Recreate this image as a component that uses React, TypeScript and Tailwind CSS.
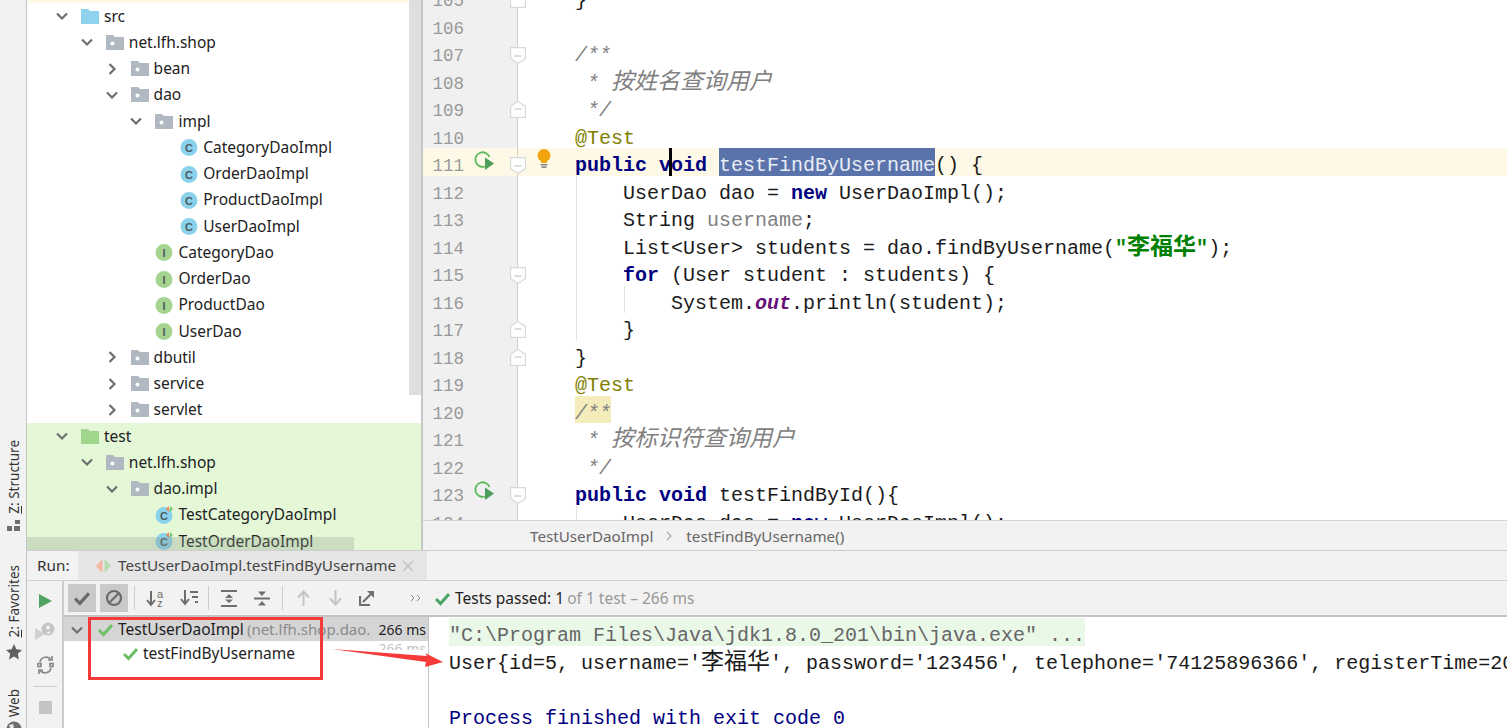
import React from 'react';

const MONO = 'font-["Liberation_Mono","Noto_Sans_CJK_SC",monospace]';

type Kind = 'src' | 'test' | 'pkg' | 'class' | 'iface' | 'testclass';

interface TreeRow {
  depth: number;
  label: string;
  kind: Kind;
  open?: boolean;
  green?: boolean;
}

const tree: TreeRow[] = [
  { depth: 0, label: 'src', kind: 'src', open: true },
  { depth: 1, label: 'net.lfh.shop', kind: 'pkg', open: true },
  { depth: 2, label: 'bean', kind: 'pkg', open: false },
  { depth: 2, label: 'dao', kind: 'pkg', open: true },
  { depth: 3, label: 'impl', kind: 'pkg', open: true },
  { depth: 4, label: 'CategoryDaoImpl', kind: 'class' },
  { depth: 4, label: 'OrderDaoImpl', kind: 'class' },
  { depth: 4, label: 'ProductDaoImpl', kind: 'class' },
  { depth: 4, label: 'UserDaoImpl', kind: 'class' },
  { depth: 3, label: 'CategoryDao', kind: 'iface' },
  { depth: 3, label: 'OrderDao', kind: 'iface' },
  { depth: 3, label: 'ProductDao', kind: 'iface' },
  { depth: 3, label: 'UserDao', kind: 'iface' },
  { depth: 2, label: 'dbutil', kind: 'pkg', open: false },
  { depth: 2, label: 'service', kind: 'pkg', open: false },
  { depth: 2, label: 'servlet', kind: 'pkg', open: false },
  { depth: 0, label: 'test', kind: 'test', open: true, green: true },
  { depth: 1, label: 'net.lfh.shop', kind: 'pkg', open: true, green: true },
  { depth: 2, label: 'dao.impl', kind: 'pkg', open: true, green: true },
  { depth: 3, label: 'TestCategoryDaoImpl', kind: 'testclass', green: true },
  { depth: 3, label: 'TestOrderDaoImpl', kind: 'testclass', green: true },
];

const NodeIcon = ({ kind }: { kind: Kind }) => {
  if (kind === 'src' || kind === 'test') {
    return (
      <svg width="18" height="15" viewBox="0 0 18 15">
        <path d="M0 0h7l2 2h9v13H0z" fill={kind === 'src' ? '#8dd3ee' : '#9fd68c'} />
      </svg>
    );
  }
  if (kind === 'pkg') {
    return (
      <svg width="18" height="15" viewBox="0 0 18 15">
        <path d="M0 0h7l2 2h9v13H0z" fill="#b0b9c1" />
        <circle cx="6.5" cy="8.5" r="2" fill="#fff" />
      </svg>
    );
  }
  const letter = kind === 'iface' ? 'I' : 'C';
  const fill = kind === 'iface' ? '#a5d491' : '#8ad2ec';
  return (
    <svg width="20" height="20" viewBox="0 0 20 20">
      <circle cx="9" cy="10.5" r="8.5" fill={fill} />
      <text
        x="9"
        y="14.5"
        textAnchor="middle"
        fontSize="11"
        fontWeight="700"
        fontFamily="Liberation Sans"
        fill="#4e5a60"
      >
        {letter}
      </text>
      {kind === 'testclass' && (
        <g>
          <path d="M14 1v6l-3-3z" fill="#ee8650" />
          <path d="M15 1v6l3-3z" fill="#7ec36c" />
        </g>
      )}
    </svg>
  );
};

const Chevron = ({ open }: { open: boolean }) => (
  <svg width="14" height="14" viewBox="0 0 14 14" fill="none" stroke="#6e6e6e" strokeWidth="2.2">
    {open ? <path d="M2 4.5l5 5 5-5" /> : <path d="M4.5 2l5 5-5 5" />}
  </svg>
);

const Check = ({ size = 15, color = '#6cc06a' }: { size?: number; color?: string }) => (
  <svg width={size} height={size} viewBox="0 0 15 15" fill="none" stroke={color} strokeWidth="3">
    <path d="M1 8l4.5 4.5L14 3" />
  </svg>
);

const Fold = ({ dir }: { dir: 'down' | 'up' }) => (
  <svg width="16" height="18" viewBox="0 0 16 18" fill="#fff" stroke="#d9d9d9" strokeWidth="1.2">
    {dir === 'down' ? <path d="M.6.6h14.8v11L8 16.6.6 11.6z" /> : <path d="M.6 17.4h14.8v-11L8 1.4.6 6.4z" />}
    <path d="M4.5 9h7" stroke="#c6c6c6" />
  </svg>
);

const RunGutter = () => (
  <svg width="22" height="22" viewBox="0 0 22 22" fill="none">
    <path d="M12 16.5A7.3 7.3 0 1 1 16.5 7" stroke="#5cb85c" strokeWidth="1.8" />
    <path d="M12 7.5l9 6-9 6.5z" fill="#4f9d5b" />
  </svg>
);

const Bulb = () => (
  <svg width="14" height="20" viewBox="0 0 14 20">
    <circle cx="7" cy="6.5" r="6.5" fill="#f0a30a" />
    <rect x="4" y="11" width="6" height="3" fill="#f0a30a" />
    <rect x="3.5" y="15" width="7" height="1.6" fill="#8c8c8c" />
    <rect x="4.5" y="17.4" width="5" height="1.6" fill="#8c8c8c" />
  </svg>
);

const K = ({ children }: { children: React.ReactNode }) => <span className="font-bold text-[#000080]">{children}</span>;
const Doc = ({ children }: { children: React.ReactNode }) => <span className="italic text-[#808080]">{children}</span>;
const Zh = ({ children }: { children: React.ReactNode }) => <span className="text-[23px]">{children}</span>;

interface CodeLine {
  n: number;
  fold?: 'down' | 'up';
  code?: React.ReactNode;
  guide?: boolean;
  guide2?: boolean;
}

const lines: CodeLine[] = [
  { n: 105, fold: 'up', code: '}' },
  { n: 106 },
  { n: 107, fold: 'down', code: <Doc>/**</Doc> },
  { n: 108, code: <Doc> * <Zh>按姓名查询用户</Zh></Doc> },
  { n: 109, fold: 'up', code: <Doc> */</Doc> },
  { n: 110, code: <span className="text-[#808000]">@Test</span> },
  {
    n: 111,
    fold: 'down',
    code: (
      <>
        <K>public void</K> <span className="text-[#e8ecf5]">testFindByUsername</span>() {'{'}
      </>
    ),
  },
  { n: 112, guide: true, code: <>    UserDao dao = <K>new</K> UserDaoImpl();</> },
  { n: 113, guide: true, code: <>    String <span className="text-[#808080]">username</span>;</> },
  {
    n: 114,
    guide: true,
    code: (
      <>
        {'    List<User> students = dao.findByUsername('}
        <span className="font-bold text-[#008000]">
          "<Zh>李福华</Zh>"
        </span>
        );
      </>
    ),
  },
  { n: 115, fold: 'down', guide: true, code: <>    <K>for</K> (User student : students) {'{'}</> },
  {
    n: 116,
    guide: true,
    guide2: true,
    code: (
      <>
        {'        System.'}
        <span className="font-bold italic text-[#660e7a]">out</span>.println(student);
      </>
    ),
  },
  { n: 117, fold: 'up', guide: true, code: '    }' },
  { n: 118, fold: 'up', code: '}' },
  { n: 119, code: <span className="text-[#808000]">@Test</span> },
  { n: 120, code: <Doc>/**</Doc> },
  { n: 121, code: <Doc> * <Zh>按标识符查询用户</Zh></Doc> },
  { n: 122, code: <Doc> */</Doc> },
  { n: 123, fold: 'down', code: <><K>public void</K> testFindById(){'{'}</> },
  { n: 124, guide: true, code: <>    UserDao dao = <K>new</K> UserDaoImpl();</> },
];

const Side = ({ children, className }: { children: React.ReactNode; className: string }) => (
  <div
    className={`shrink-0 whitespace-nowrap [writing-mode:vertical-rl] rotate-180 font-["Noto_Sans",sans-serif] text-[13.5px] leading-[18px] text-[#333] ${className}`}
  >
    {children}
  </div>
);

const LeftStrip = () => (
  <div className="flex w-[27px] shrink-0 flex-col items-center overflow-hidden border-r border-[#c4c4c4] bg-[#f2f2f2] pl-[2px]">
    <Side className="mt-[440px]">
      <span className="underline">Z</span>: Structure
    </Side>
    <svg className="mt-[6px] shrink-0" width="14" height="11" viewBox="0 0 14 11" fill="#6e6e6e">
      <rect x="8" y="0" width="5" height="4" />
      <rect x="0" y="6" width="5" height="5" />
      <rect x="7" y="6" width="6" height="5" />
    </svg>
    <Side className="mt-[34px]">
      <span className="underline">2</span>: Favorites
    </Side>
    <svg className="mt-[7px] shrink-0" width="16" height="16" viewBox="0 0 16 16" fill="#5f5f5f">
      <path d="M8 0l2.4 5.3 5.6.6-4.2 3.8 1.2 5.7L8 12.5l-5 2.9 1.2-5.7L0 5.9l5.6-.6z" />
    </svg>
    <Side className="mt-[29px]">Web</Side>
    <svg className="mt-[4px] shrink-0" width="16" height="16" viewBox="0 0 16 16">
      <circle cx="8" cy="8" r="7.5" fill="#6e6e6e" />
      <path d="M3 4l4-1 1 3-3 3zM10 9l4-1-1 5-3 1z" fill="#e8e8e8" />
    </svg>
  </div>
);

const ProjectTree = () => (
  <div className="relative w-[395px] shrink-0 overflow-hidden border-r border-[#c8c8c8] bg-white">
    <div className="h-[3px] bg-[#fdfbe6]" />
    {tree.map((r, i) => (
      <div
        key={i}
        className={`flex h-[26.25px] items-center font-["Noto_Sans",sans-serif] text-[15.5px] text-[#222] ${r.green ? 'bg-[#e4f8d8]' : ''}`}
        style={{ paddingLeft: 28 + r.depth * 24.8 }}
      >
        <span className="flex w-[14px] justify-center">{r.open !== undefined && <Chevron open={r.open} />}</span>
        <span className="ml-[12px] flex w-[23px] shrink-0 items-center">
          <NodeIcon kind={r.kind} />
        </span>
        <span>{r.label}</span>
      </div>
    ))}
    <div className="absolute right-0 top-0 h-[395px] w-[12px] bg-[#dfdfdf]" />
    <div className="absolute bottom-0 left-0 h-[13px] w-[327px] bg-[#8f9f88]/30" />
  </div>
);

const Editor = () => (
  <div className="flex min-w-0 flex-1 flex-col border-l border-[#c4c4c4] bg-white">
    <div className={`h-[520px] overflow-hidden ${MONO}`}>
      <div className="-mt-[17px]">
        {lines.map((l) => {
          const active = l.n === 111;
          return (
            <div key={l.n} className={`flex h-[27.5px] ${active ? 'bg-[#fdf9e6]' : ''}`}>
              <div
                className={`relative w-[95px] shrink-0 border-r border-[#cfcfcf] ${active ? '' : 'bg-[#f0f0f0]'}`}
              >
                <div className="w-[41px] pt-[6px] text-right text-[17.5px] leading-[24px] text-[#999]">{l.n}</div>
                {(l.n === 111 || l.n === 123) && (
                  <div className="absolute left-[50px] top-[2px]">
                    <RunGutter />
                  </div>
                )}
                {l.fold && (
                  <div className={`absolute left-[87px] z-10 ${l.fold === 'down' ? 'top-[9px]' : 'top-[7px]'}`}>
                    <Fold dir={l.fold} />
                  </div>
                )}
              </div>
              <div className="relative h-[27.5px] min-w-0 flex-1 whitespace-pre pl-[57px] text-[20px] leading-[35.5px] text-[#1b1b1b]">
                {l.guide && <div className="absolute bottom-0 left-[58px] top-0 w-px bg-[#e3e3e3]" />}
                {l.guide2 && <div className="absolute bottom-0 left-[106px] top-0 w-px bg-[#e3e3e3]" />}
                {active && (
                  <>
                    <div className="absolute left-[19px] top-[1px]">
                      <Bulb />
                    </div>
                    <div className="absolute bottom-0 left-[201px] top-0 w-[216px] bg-[#5a73aa]" />
                    <div className="absolute bottom-0 left-[151px] top-0 z-10 w-[3px] bg-black" />
                  </>
                )}
                {l.n === 120 && <div className="absolute bottom-0 left-[57px] top-0 w-[36px] bg-[#f5ecbc]" />}
                <span className="relative">{l.code}</span>
              </div>
            </div>
          );
        })}
      </div>
    </div>
    <div className='flex h-[30px] items-center border-t border-[#d4d4d4] bg-[#f2f2f2] pl-[107px] pt-[1px] font-["Noto_Sans",sans-serif] text-[15.2px] text-[#666]'>
      <span>TestUserDaoImpl</span>
      <svg className="ml-[13px] mr-[14px]" width="6" height="10" viewBox="0 0 6 10" fill="none" stroke="#aaa" strokeWidth="1.2">
        <path d="M1 1l4 4-4 4" />
      </svg>
      <span>testFindByUsername()</span>
    </div>
  </div>
);

const Sep = ({ className }: { className: string }) => <div className={`h-[24px] w-px bg-[#cdcdcd] ${className}`} />;

const Slot = ({ w, children }: { w: string; children: React.ReactNode }) => (
  <div className={`flex shrink-0 justify-center ${w}`}>{children}</div>
);

const Toolbar = () => (
  <div className='flex h-[34px] items-center bg-[#f2f2f2] pl-[4px] font-["Noto_Sans",sans-serif] text-[15.5px]'>
    <div className="flex h-[28px] w-[28px] items-center justify-center bg-[#c9c9c9]">
      <Check size={16} color="#6a6a6a" />
    </div>
    <div className="ml-[4px] flex h-[28px] w-[28px] items-center justify-center bg-[#c9c9c9]">
      <svg width="18" height="18" viewBox="0 0 18 18" fill="none" stroke="#6a6a6a" strokeWidth="2.2">
        <circle cx="9" cy="9" r="7" />
        <path d="M4.5 13.5l9-9" />
      </svg>
    </div>
    <Sep className="ml-[6px]" />
    <Slot w="ml-[3px] w-[34px]">
      <svg width="18" height="17" viewBox="0 0 18 17" fill="none" stroke="#6e6e6e" strokeWidth="2">
        <path d="M5 1v13M1 10l4 5 4-5" />
        <text x="11" y="7.500" fontSize="11" fontFamily="Liberation Sans" fill="#6e6e6e" stroke="none">a</text>
        <text x="11" y="16.500" fontSize="11" fontFamily="Liberation Sans" fill="#6e6e6e" stroke="none">z</text>
      </svg>
    </Slot>
    <Slot w="w-[34px]">
      <svg width="18" height="16" viewBox="0 0 18 16" fill="none" stroke="#6e6e6e" strokeWidth="2">
        <path d="M5 0v13M1 9l4 5 4-5" />
        <path d="M10 2h8M12 7h6M15 12h3" />
      </svg>
    </Slot>
    <Sep className="ml-[2px]" />
    <Slot w="ml-[3px] w-[33px]">
      <svg width="16" height="17" viewBox="0 0 16 17" fill="#6e6e6e">
        <rect x="0" y="0" width="16" height="2" />
        <rect x="0" y="15" width="16" height="2" />
        <path d="M8 4l4 4H4zM8 13L4 9.500h8z" />
      </svg>
    </Slot>
    <Slot w="w-[33px]">
      <svg width="16" height="17" viewBox="0 0 16 17" fill="#6e6e6e">
        <rect x="0" y="7.500" width="16" height="2" />
        <path d="M8 6L4 1.500h8zM8 11l4 4.500H4z" />
      </svg>
    </Slot>
    <Sep className="ml-[4px]" />
    <Slot w="ml-[4px] w-[32px]">
      <svg width="13" height="16" viewBox="0 0 13 16" fill="none" stroke="#c4c4c4" strokeWidth="2">
        <path d="M6.500 16V2M1 7.500l5.500-6 5.500 6" />
      </svg>
    </Slot>
    <Slot w="w-[32px]">
      <svg width="13" height="16" viewBox="0 0 13 16" fill="none" stroke="#c4c4c4" strokeWidth="2">
        <path d="M6.500 0v14M1 8.500l5.500 6 5.500-6" />
      </svg>
    </Slot>
    <Slot w="w-[32px]">
      <svg width="16" height="16" viewBox="0 0 16 16" fill="none" stroke="#6e6e6e" strokeWidth="2.2">
        <path d="M1 6v9h10" />
        <path d="M4 12L14 2" />
        <path d="M8 1h7v7" fill="#6e6e6e" stroke="none" />
      </svg>
    </Slot>
    <div className="ml-[27px] w-[14px] text-center leading-none">
      <svg width="11" height="8" viewBox="0 0 11 8" fill="none" stroke="#888" strokeWidth="1">
        <path d="M1 1l3 3-3 3M7 1l3 3-3 3" />
      </svg>
    </div>
    <div className="ml-[11px] flex items-center pt-[1px]">
      <Check size={15} color="#4aa565" />
      <span className="ml-[5px] text-[#222]">Tests passed: 1</span>
      <span className="ml-[3px] text-[#999]">of 1 test – 266 ms</span>
    </div>
  </div>
);

const RunPanel = () => (
  <div className="flex h-[178px] flex-col border-t border-[#cdcdcd] bg-[#f2f2f2]">
    <div className='flex h-[30px] shrink-0 items-stretch border-b border-[#cfcfcf] font-["Noto_Sans",sans-serif] text-[15.3px]'>
      <div className="flex w-[51px] items-center pl-[10px] text-[#333]">Run:</div>
      <div className="flex w-[349px] items-center bg-[#e6e6e6] pl-[18px] text-[#444]">
        <svg width="15" height="14" viewBox="0 0 15 14">
          <path d="M6.500 0v14L0 7z" fill="#f2b8a0" />
          <path d="M8.500 0v14L15 7z" fill="#b6dcae" />
        </svg>
        <span className="ml-[7px]">TestUserDaoImpl.testFindByUsername</span>
        <svg className="ml-[6px]" width="12" height="12" viewBox="0 0 12 12" stroke="#c4c4c4" strokeWidth="1.500">
          <path d="M1 1l10 10M11 1L1 11" />
        </svg>
      </div>
    </div>
    <div className="flex min-h-0 flex-1">
      <div className="flex w-[37px] shrink-0 flex-col items-center border-r-2 border-[#cdcdcd] pl-[1px]">
        <svg className="mt-[13px]" width="13" height="14" viewBox="0 0 13 14">
          <path d="M0 0l13 7-13 7z" fill="#4fa35e" />
        </svg>
        <svg className="mt-[14px]" width="20" height="20" viewBox="0 0 20 20">
          <path d="M0 6l10 6-10 6z" fill="#d0d0d0" />
          <circle cx="13" cy="7" r="6.500" fill="#c4c4c4" />
          <circle cx="13" cy="5.500" r="2" fill="#f2f2f2" />
          <path d="M11 11l4-2v3z" fill="#f2f2f2" />
        </svg>
        <svg className="mt-[13px]" width="17" height="20" viewBox="0 0 17 20" fill="none" stroke="#8a8a8a" strokeWidth="1.700">
          <path d="M3 7a6 6 0 0 1 11-2M14 13a6 6 0 0 1-11 2" />
          <path d="M11 5h4V1M6 15H2v4" />
          <rect x="1" y="8.500" width="3" height="3" />
          <rect x="13" y="8.500" width="3" height="3" />
        </svg>
        <div className="mt-[11px] h-px w-[24px] bg-[#cdcdcd]" />
        <div className="mt-[14px] h-[13px] w-[13px] bg-[#c4c4c4]" />
      </div>
      <div className="flex min-w-0 flex-1 flex-col">
        <Toolbar />
        <div className="flex min-h-0 flex-1 border-t-2 border-[#c4c4c4] bg-white">
          <div className='w-[365px] shrink-0 border-r border-[#c4c4c4] font-["Noto_Sans",sans-serif] text-[15.5px]'>
            <div className="flex h-[24px] items-center bg-[#d5d5d5] pr-[2px] pt-[1px]">
              <span className="ml-[6px] flex w-[14px] justify-center">
                <Chevron open />
              </span>
              <span className="ml-[14px]">
                <Check />
              </span>
              <span className="ml-[5px] whitespace-nowrap text-[#1e1e1e]">TestUserDaoImpl</span>
              <span className="ml-[3px] shrink-0 whitespace-nowrap text-[15px] text-[#8a8a8a]">(net.lfh.shop.dao.</span>
              <span className="ml-auto shrink-0 text-[14px] text-[#1e1e1e]">266 ms</span>
            </div>
            <div className="flex h-[24px] items-center pt-[1px]">
              <span className="ml-[59px]">
                <Check />
              </span>
              <span className="ml-[5px] text-[#1e1e1e]">testFindByUsername</span>
              <span className="ml-auto h-[8px] shrink-0 self-start overflow-hidden pr-[2px] text-[14px] leading-[14px] text-[#c4c4c4]">
                266 ms
              </span>
            </div>
          </div>
          <div className={`min-w-0 flex-1 overflow-hidden whitespace-pre pl-[20px] pt-[1px] text-[20px] leading-[35.5px] ${MONO}`}>
            <div className="h-[27.5px] w-[636px] bg-[#eaf8e8] text-[#666]">
              {'"C:\\Program Files\\Java\\jdk1.8.0_201\\bin\\java.exe" ...'}
            </div>
            <div className="h-[27.5px] text-[#1b1b1b]">
              User{'{'}id=5, username='<Zh>李福华</Zh>', password='123456', telephone='74125896366', registerTime=2019
            </div>
            <div className="h-[27.5px]">&nbsp;</div>
            <div className="h-[27.5px] text-[#000080]">Process finished with exit code 0</div>
          </div>
        </div>
      </div>
    </div>
  </div>
);

export default function App() {
  return (
    <div className="relative flex h-[728px] w-[1507px] overflow-hidden bg-white">
      <LeftStrip />
      <div className="flex min-w-0 flex-1 flex-col">
        <div className="flex h-[550px] shrink-0">
          <ProjectTree />
          <Editor />
        </div>
        <RunPanel />
      </div>
      {/* annotations added on top of the screenshot */}
      <div className="absolute left-[88px] top-[617px] h-[63px] w-[235px] border-[3px] border-[#f63a3a]" />
      <svg className="absolute left-[330px] top-[645px]" width="115" height="25" viewBox="0 0 115 25">
        <path d="M2 4L97 11 95 8 113 17 95 22 96 17z" fill="#f63a3a" />
      </svg>
    </div>
  );
}
